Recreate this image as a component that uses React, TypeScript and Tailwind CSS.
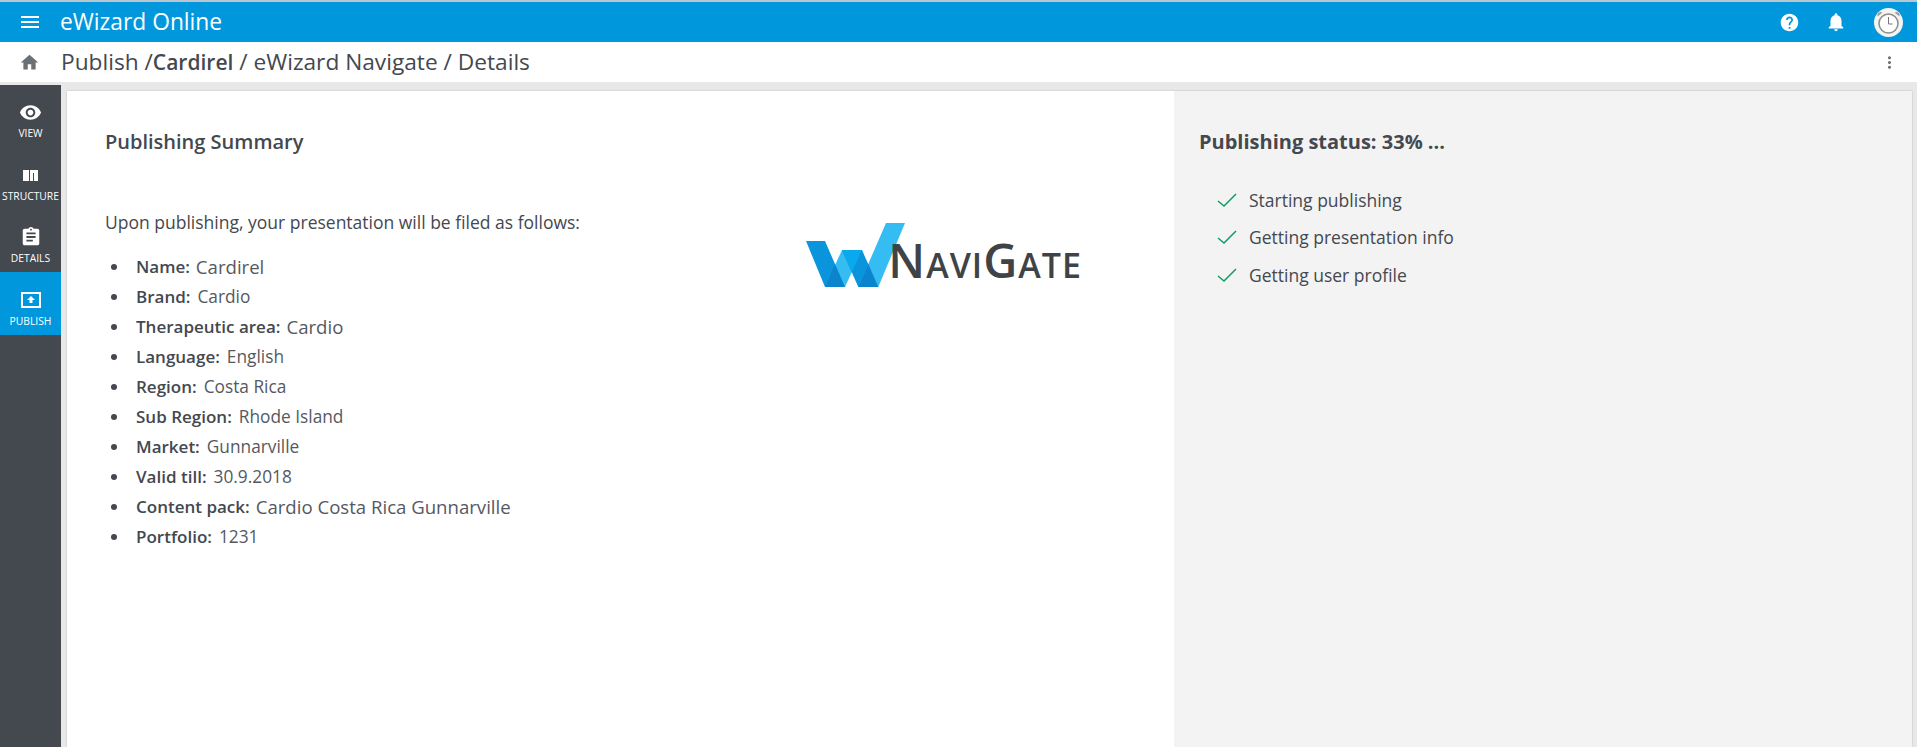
import React from 'react'
import { MdMenu, MdHome, MdHelp, MdNotifications, MdMoreVert, MdVisibility, MdAssignment } from 'react-icons/md'

const summary = [
  { k: 'Name:', v: 'Cardirel', big: true },
  { k: 'Brand:', v: 'Cardio' },
  { k: 'Therapeutic area:', v: 'Cardio', big: true },
  { k: 'Language:', v: 'English' },
  { k: 'Region:', v: 'Costa Rica' },
  { k: 'Sub Region:', v: 'Rhode Island' },
  { k: 'Market:', v: 'Gunnarville' },
  { k: 'Valid till:', v: '30.9.2018' },
  { k: 'Content pack:', v: 'Cardio Costa Rica Gunnarville', big: true },
  { k: 'Portfolio:', v: '1231' },
]

const steps = ['Starting publishing', 'Getting presentation info', 'Getting user profile']

const StructureIcon = () => (
  <svg width="15" height="11" viewBox="0 0 15 11" fill="white">
    <rect x="0" y="0" width="6" height="11" />
    <rect x="7" y="0" width="8" height="3" />
    <rect x="7" y="3" width="3" height="8" />
    <rect x="11" y="3" width="4" height="8" />
  </svg>
)

const PublishIcon = () => (
  <svg width="20" height="16" viewBox="0 0 20 16">
    <rect x="1" y="1" width="18" height="14" fill="none" stroke="white" strokeWidth="2" />
    <path d="M10 4l4 4h-2.5v3h-3V8H6z" fill="white" />
  </svg>
)

const Clock = () => (
  <svg width="29" height="29" viewBox="0 0 29 29">
    <circle cx="14.5" cy="14.5" r="14.5" fill="#f4f4f2" />
    <circle cx="14.5" cy="15.5" r="9.5" fill="white" stroke="#8f8f8d" strokeWidth="1.6" />
    <path d="M14.5 9v7h4" fill="none" stroke="#777" strokeWidth="1" />
    <path d="M3.5 8.5a3.4 3.4 0 0 1 5-4zM25.5 8.5a3.4 3.4 0 0 0-5-4z" fill="#9a9a98" />
  </svg>
)

const Logo = () => (
  <div className="flex items-end">
    <svg width="99" height="65" viewBox="0 0 99 65" className="shrink-0">
      <path d="M0 18h19l20 46H19z" fill="#0a94dc" />
      <path d="M19 64h20l17-37H36z" fill="#35bcf0" />
      <path d="M19 64h20l-10-23z" fill="#0a84cc" />
      <path d="M36 27h20l16.3 37h-20z" fill="#0a94dc" />
      <path d="M36 27h20L45.8 49.2z" fill="#0aa8ec" />
      <path d="M52.3 64h20L99 0H80z" fill="#35bcf2" />
      <path d="M52.3 64h20l-10-23z" fill="#0a84cc" />
    </svg>
    <div className="-ml-[17px] mb-[4px] font-['Open_Sans',sans-serif] font-semibold text-[#404346] leading-none tracking-[1px] whitespace-nowrap">
      <span className="text-[47px]">N</span>
      <span className="text-[34px]">AVI</span>
      <span className="text-[47px]">G</span>
      <span className="text-[34px]">ATE</span>
    </div>
  </div>
)

const NavItem = ({ icon, label, active, h, pt }: { icon: React.ReactNode; label: string; active?: boolean; h: string; pt: string }) => (
  <div className={`${h} ${pt} flex flex-col items-center gap-[4px] ${active ? 'bg-[#0097dc]' : ''}`}>
    <div className="h-[22px] flex items-center justify-center">{icon}</div>
    <span className="text-[10.3px] leading-[12px] text-white whitespace-nowrap">{label}</span>
  </div>
)

export default function App() {
  return (
    <div className="h-[747px] w-[1917px] overflow-hidden flex flex-col bg-[#e8e8e8] font-['Open_Sans',sans-serif] text-[#44484f]">
      <div className="h-[42px] shrink-0 border-t-2 border-[#b9c6ce] bg-[#0097dc] flex items-center text-white">
        <div className="w-[59px] flex justify-center">
          <MdMenu size={24} />
        </div>
        <span className="text-[22.8px] leading-none ml-[1px]">eWizard Online</span>
        <div className="ml-auto flex items-center">
          <MdHelp size={21} className="mr-[25px]" />
          <MdNotifications size={22} className="mr-[27px]" />
          <div className="mr-[14px]"><Clock /></div>
        </div>
      </div>

      <div className="h-[40px] shrink-0 bg-white flex items-center">
        <div className="w-[59px] flex justify-center text-[#6b7077]">
          <MdHome size={21} />
        </div>
        <div className="text-[22.7px] leading-none ml-[2px] whitespace-nowrap">
          Publish /<span className="font-semibold text-[21px]">Cardirel</span> / eWizard Navigate / Details
        </div>
        <div className="ml-auto mr-[18px] text-[#6b7077]">
          <MdMoreVert size={19} />
        </div>
      </div>

      <div className="flex-1 flex min-h-0 pt-[3px]">
        <div className="w-[61px] shrink-0 bg-[#44484f]">
          <NavItem h="h-[61px]" pt="pt-[16px]" label="VIEW" icon={<MdVisibility size={23} color="white" />} />
          <NavItem h="h-[63px]" pt="pt-[18px]" label="STRUCTURE" icon={<StructureIcon />} />
          <NavItem h="h-[63px]" pt="pt-[17px]" label="DETAILS" icon={<MdAssignment size={22} color="white" />} />
          <NavItem h="h-[63px]" pt="pt-[17px]" active label="PUBLISH" icon={<PublishIcon />} />
        </div>

        <div className="flex-1 min-w-0 flex pl-[6px] pr-[5px] pt-[6px]">
          <div className="flex-1 flex bg-white shadow-[0_0_2px_rgba(0,0,0,0.2)]">
            <div className="w-[1107px] shrink-0 pl-[38px] pt-[37px]">
              <h2 className="text-[20px] leading-[28px] font-semibold">Publishing Summary</h2>
              <div className="flex justify-between pr-[92px]">
                <div>
                  <p className="mt-[54px] text-[17.5px] leading-[24px] whitespace-nowrap">Upon publishing, your presentation will be filed as follows:</p>
                  <ul className="mt-[18px] ml-[6px]">
                    {summary.map(({ k, v, big }) => (
                      <li key={k} className="h-[30px] text-[17px] leading-[30px] whitespace-nowrap flex items-center">
                        <span className="w-[25px] shrink-0"><span className="block w-[6px] h-[6px] rounded-full bg-[#44484f]" /></span>
                        <span className="font-semibold">{k}</span>
                        <span className={big ? 'ml-[6px] text-[18.6px] text-[#55595f]' : 'ml-[7px] text-[17.3px] text-[#55595f]'}>{v}</span>
                      </li>
                    ))}
                  </ul>
                </div>
                <div className="mt-[67px]">
                  <Logo />
                </div>
              </div>
            </div>
            <div className="flex-1 bg-[#f3f3f3] pl-[25px] pt-[37px]">
              <h2 className="text-[20px] leading-[28px] font-bold">Publishing status: 33% ...</h2>
              <ul className="mt-[25px] ml-[18px]">
                {steps.map((s) => (
                  <li key={s} className="h-[37.5px] flex items-center text-[17.5px] leading-[24px]">
                    <svg width="20" height="16" viewBox="0 0 20 16" className="mr-[12px] shrink-0">
                      <path d="M1 9l6 5L19 2" fill="none" stroke="#0f9d63" strokeWidth="1.5" />
                    </svg>
                    {s}
                  </li>
                ))}
              </ul>
            </div>
          </div>
        </div>
      </div>
    </div>
  )
}
